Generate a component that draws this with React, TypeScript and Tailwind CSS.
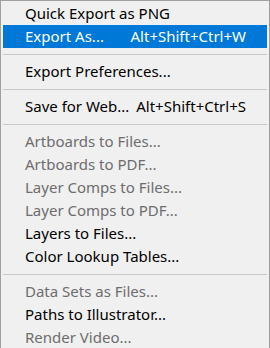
type Item =
  | { kind: "item"; label: string; shortcut?: string; disabled?: boolean; active?: boolean }
  | { kind: "sep" };

const items: Item[] = [
  { kind: "item", label: "Quick Export as PNG" },
  { kind: "item", label: "Export As...", shortcut: "Alt+Shift+Ctrl+W", active: true },
  { kind: "sep" },
  { kind: "item", label: "Export Preferences..." },
  { kind: "sep" },
  { kind: "item", label: "Save for Web...", shortcut: "Alt+Shift+Ctrl+S" },
  { kind: "sep" },
  { kind: "item", label: "Artboards to Files...", disabled: true },
  { kind: "item", label: "Artboards to PDF...", disabled: true },
  { kind: "item", label: "Layer Comps to Files...", disabled: true },
  { kind: "item", label: "Layer Comps to PDF...", disabled: true },
  { kind: "item", label: "Layers to Files..." },
  { kind: "item", label: "Color Lookup Tables..." },
  { kind: "sep" },
  { kind: "item", label: "Data Sets as Files...", disabled: true },
  { kind: "item", label: "Paths to Illustrator..." },
  { kind: "item", label: "Render Video...", disabled: true },
];

export default function App() {
  return (
    <div className="w-[270px] h-[348px] overflow-hidden bg-white">
      <div
        className="flex flex-col w-[270px] border border-[#a0a0a0] bg-[#f0f0f0] pt-px px-[2px] text-[15px]"
        style={{ fontFamily: '"Noto Sans", "Open Sans", sans-serif' }}
      >
        {items.map((it, i) =>
          it.kind === "sep" ? (
            <div key={i} className="flex items-center h-[12px]">
              <div className="w-full h-px bg-[#c8c8c8]" />
            </div>
          ) : (
            <div
              key={i}
              className={
                "flex items-center h-[23px] pl-[22px] pr-[21px] leading-none " +
                (it.active
                  ? "bg-[#0078d7] text-white"
                  : it.disabled
                  ? "text-[#6d6d6d]"
                  : "text-black")
              }
            >
              <span>{it.label}</span>
              {it.shortcut && <span className="ml-auto">{it.shortcut}</span>}
            </div>
          )
        )}
      </div>
    </div>
  );
}
